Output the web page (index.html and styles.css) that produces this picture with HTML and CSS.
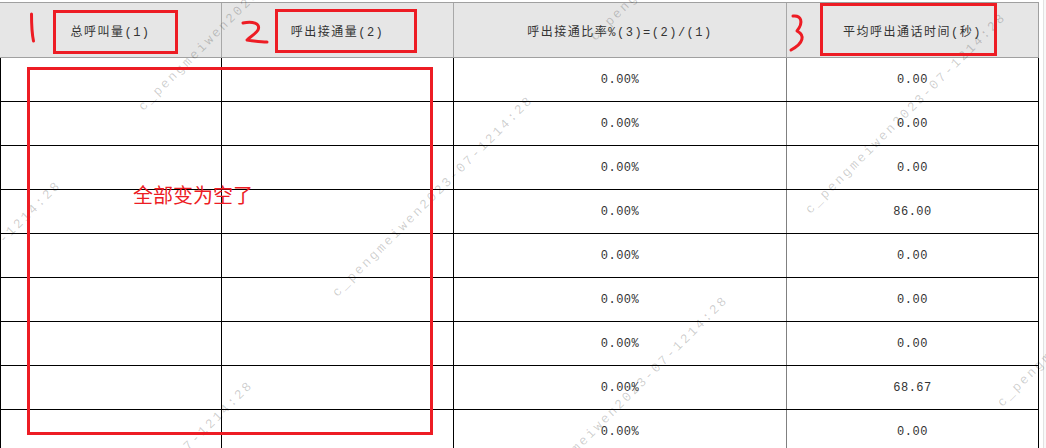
FILE: index.html
```html
<!DOCTYPE html>
<html lang="zh-CN">
<head>
    <meta charset="UTF-8">
    <title>呼出统计</title>
    <link rel="stylesheet" href="styles.css">
</head>
<body>
    <div class="page">
        <div class="grid">
            <div class="row head">
                <div class="cell c1">总呼叫量(1)</div>
                <div class="cell c2">呼出接通量(2)</div>
                <div class="cell c3">呼出接通比率%(3)=(2)/(1)</div>
                <div class="cell c4">平均呼出通话时间(秒)</div>
            </div>
            <div class="row"><div class="cell c1"></div><div class="cell c2"></div><div class="cell c3">0.00%</div><div class="cell c4">0.00</div></div>
            <div class="row"><div class="cell c1"></div><div class="cell c2"></div><div class="cell c3">0.00%</div><div class="cell c4">0.00</div></div>
            <div class="row"><div class="cell c1"></div><div class="cell c2"></div><div class="cell c3">0.00%</div><div class="cell c4">0.00</div></div>
            <div class="row"><div class="cell c1"></div><div class="cell c2"></div><div class="cell c3">0.00%</div><div class="cell c4">86.00</div></div>
            <div class="row"><div class="cell c1"></div><div class="cell c2"></div><div class="cell c3">0.00%</div><div class="cell c4">0.00</div></div>
            <div class="row"><div class="cell c1"></div><div class="cell c2"></div><div class="cell c3">0.00%</div><div class="cell c4">0.00</div></div>
            <div class="row"><div class="cell c1"></div><div class="cell c2"></div><div class="cell c3">0.00%</div><div class="cell c4">0.00</div></div>
            <div class="row"><div class="cell c1"></div><div class="cell c2"></div><div class="cell c3">0.00%</div><div class="cell c4">68.67</div></div>
            <div class="row"><div class="cell c1"></div><div class="cell c2"></div><div class="cell c3">0.00%</div><div class="cell c4">0.00</div></div>
        </div>
        <div class="side"></div>

        <!-- watermark -->
        <div class="marks">
            <span class="mark m1">c_pengmeiwen2023-07-1214:28</span>
            <span class="mark m2">c_pengmeiwen2023-07-1214:28</span>
            <span class="mark m3">c_pengmeiwen2023-07-1214:28</span>
            <span class="mark m4">c_pengmeiwen2023-07-1214:28</span>
            <span class="mark m5">c_pengmeiwen2023-07-1214:28</span>
            <span class="mark m6">c_pengmeiwen2023-07-1214:28</span>
            <span class="mark m7">c_pengmeiwen2023-07-1214:28</span>
            <span class="mark m8">c_pengmeiwen2023-07-1214:28</span>
        </div>

        <!-- red annotations -->
        <svg class="notes" width="1046" height="448" viewBox="0 0 1046 448" fill="none" stroke="#ed1c24" stroke-width="3" stroke-linecap="round" stroke-linejoin="round">
            <rect x="54.5" y="11.5" width="122" height="41" stroke-linecap="butt" stroke-linejoin="miter"/>
            <rect x="276.5" y="10.5" width="139" height="41" stroke-linecap="butt" stroke-linejoin="miter"/>
            <rect x="821.5" y="4.5" width="174" height="50" stroke-linecap="butt" stroke-linejoin="miter"/>
            <rect x="28.5" y="68.5" width="403" height="365" stroke-linecap="butt" stroke-linejoin="miter"/>
            <path d="M31.5 14 C31.5 24 32 34 33.5 41"/>
            <path d="M243 23 C252 21 261 23 258 30 C255 35 249 37 247 40 C254 41 261 42 267 42"/>
            <path d="M793 16 C801 15 804 22 797 31 C805 35 804 43 791 50"/>
        </svg>
        <div class="note-text">全部变为空了</div>
    </div>
</body>
</html>
```

FILE: styles.css
```css
body {
    margin: 0;
    background: #ffffff;
    font-family: "Liberation Mono", "Noto Sans CJK SC", monospace;
    color: #333;
}

.page {
    position: relative;
    display: flex;
    width: 1046px;
    height: 448px;
    padding-top: 2px;
    box-sizing: border-box;
    overflow: hidden;
}

.grid {
    width: 1039px;
    flex-shrink: 0;
}

.row {
    display: flex;
    height: 44px;
    border-bottom: 1px solid #000;
    box-sizing: border-box;
}

.cell {
    display: flex;
    align-items: center;
    justify-content: center;
    box-sizing: border-box;
    border-left: 1px solid #000;
    font-size: 12px;
    letter-spacing: 0.5px;
    white-space: nowrap;
}

.c1 { width: 221px; }
.c2 { width: 232px; }
.c3 { width: 333px; }
.c4 {
    width: 253px;
    border-left-color: #808080;
    border-right: 1px solid #000;
}

.head {
    height: 56px;
    background: #e6e6e6;
    border-top: 1px solid #a0a0a0;
    border-bottom: 1px solid #a0a0a0;
}

.head .cell {
    border-left-color: #a8a8a8;
    letter-spacing: 1.5px;
    padding-top: 1px;
}

.head .c1 {
    border-left: none;
}

.head .c4 {
    border-right-color: #a0a0a0;
}

.side {
    width: 7px;
    margin-top: -2px;
    padding-left: 4px;
    box-sizing: border-box;
}

.side::before {
    content: "";
    display: block;
    height: 100%;
    border-left: 1px solid #e2e2e2;
    background: #f8f8f8;
}

.marks {
    position: absolute;
    left: 0;
    top: 0;
    width: 1046px;
    height: 448px;
    overflow: hidden;
    pointer-events: none;
}

.mark {
    position: absolute;
    font-family: "Liberation Mono", monospace;
    font-size: 13px;
    line-height: 14px;
    letter-spacing: 2.5px;
    color: rgba(0, 0, 0, 0.2);
    white-space: nowrap;
    transform: rotate(-45deg);
    transform-origin: 0 100%;
}

.m1 { left: -132px; top: 371px; }
.m2 { left: 146px; top: 100px; }
.m3 { left: 340px; top: 286px; }
.m4 { left: 598px; top: 30px; }
.m5 { left: 813px; top: 203px; }
.m6 { left: 1005px; top: 396px; }
.m7 { left: 535px; top: 486px; }
.m8 { left: 60px; top: 571px; }

.notes {
    position: absolute;
    left: 0;
    top: 0;
}

.note-text {
    position: absolute;
    left: 133px;
    top: 181px;
    font-family: "Noto Sans CJK SC", sans-serif;
    font-size: 20px;
    line-height: 28px;
    color: #ed1c24;
}
```
